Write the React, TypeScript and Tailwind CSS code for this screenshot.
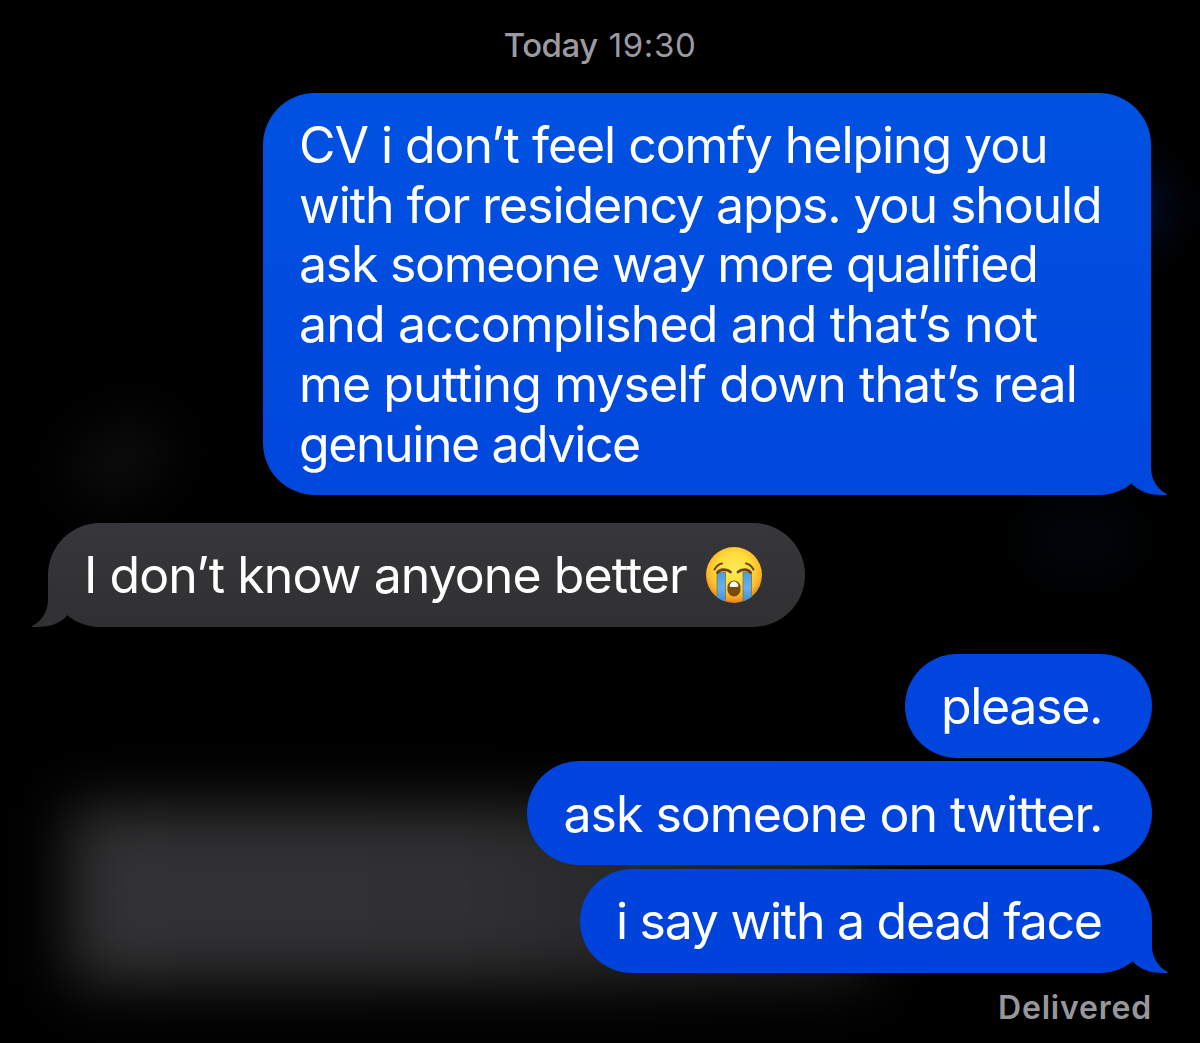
import type { ReactNode } from 'react';
import clsx from 'clsx';

type Line = { text: string; tracking: string };

const advice: Line[] = [
  { text: 'CV i don’t feel comfy helping you', tracking: 'tracking-[-1.06px]' },
  { text: 'with for residency apps. you should', tracking: 'tracking-[-1.09px]' },
  { text: 'ask someone way more qualified', tracking: 'tracking-[-1.26px]' },
  { text: 'and accomplished and that’s not', tracking: 'tracking-[-0.83px]' },
  { text: 'me putting myself down that’s real', tracking: 'tracking-[-0.9px]' },
  { text: 'genuine advice', tracking: 'tracking-[-1.42px]' },
];

function SobEmoji() {
  return (
    <svg viewBox="0 0 58 58" className="relative h-[58px] w-[58px] shrink-0">
      <defs>
        <radialGradient id="skin" cx="0.5" cy="0.4" r="0.6">
          <stop offset="0" stopColor="#ffea55" />
          <stop offset="0.5" stopColor="#ffdc3c" />
          <stop offset="0.78" stopColor="#fdb92c" />
          <stop offset="1" stopColor="#e2801a" />
        </radialGradient>
        <linearGradient id="tear" x1="0" y1="0" x2="0" y2="1">
          <stop offset="0" stopColor="#4a9ce6" />
          <stop offset="0.5" stopColor="#64b2f0" />
          <stop offset="1" stopColor="#3787d8" />
        </linearGradient>
        <clipPath id="face">
          <circle cx="29" cy="29" r="28" />
        </clipPath>
      </defs>
      <circle cx="29" cy="29" r="28" fill="url(#skin)" />
      <g clipPath="url(#face)">
        <path d="M12 26h8.500v32h-8.500z" fill="url(#tear)" stroke="#8f7a35" strokeWidth="0.9" />
        <path d="M38 26h8.500v32h-8.500z" fill="url(#tear)" stroke="#8f7a35" strokeWidth="0.9" />
      </g>
      <g fill="none" stroke="#6b4310" strokeLinecap="round">
        <path d="M12.500 26.500C15 22.800 22 22.800 25.500 26" strokeWidth="2.800" />
        <path d="M33 26C36.500 22.800 43 22.800 45.500 26.500" strokeWidth="2.800" />
        <path d="M9.500 23.500C11.500 20 14 18 17 17.500" strokeWidth="2" />
        <path d="M41 17.500C44 18 46.500 20 48.500 23.500" strokeWidth="2" />
      </g>
      <rect x="22.500" y="34.500" width="13" height="16" rx="6.500" fill="#7a4a0e" />
      <path d="M24.500 40.500c0-3 2-5 4.500-5s4.500 2 4.500 5c-2.700 0.800-6.300 0.800-9 0z" fill="#fff" />
    </svg>
  );
}

// Curl at the bottom corner of the last bubble in a group
function Tail({ side, className }: { side: 'left' | 'right'; className: string }) {
  return (
    <svg
      viewBox="0 0 70 53"
      className={clsx(
        'absolute bottom-0 h-[53px] w-[70px]',
        side === 'right' ? 'right-[-17px]' : 'left-[-17px] -scale-x-100',
        className
      )}
    >
      <path d="M47 4H53V26C53 37 59 47 69 52C69 53 67 53 65 53C52 53 42 50 34 42Z" fill="currentColor" />
    </svg>
  );
}

function Bubble({ className, children }: { className: string; children: ReactNode }) {
  return (
    <div className={clsx('relative flex h-[104px] items-center whitespace-nowrap text-[50px]', className)}>
      {children}
    </div>
  );
}

function Backdrop() {
  return (
    <div className="absolute inset-0">
      <div className="absolute top-[807px] left-[70px] h-[176px] w-[800px] bg-linear-to-r from-[#323234] via-[#303032] to-[#1c1c1e] blur-[29px]" />
      <div className="absolute top-[430px] left-[70px] h-[60px] w-[100px] -rotate-30 rounded-full bg-[#0e0e0e] blur-[26px]" />
      <div className="absolute top-[170px] left-[1105px] h-[76px] w-[60px] rounded-full bg-[#000f2c] blur-[20px]" />
      <div className="absolute top-[510px] left-[1030px] h-[60px] w-[100px] rounded-full bg-[#01060c] blur-[20px]" />
    </div>
  );
}

export default function App() {
  return (
    <div className="relative h-[1043px] w-[1200px] overflow-hidden bg-black font-['Inter',sans-serif] text-white">
      <Backdrop />
      <main className="relative flex flex-col pr-12 pl-12">
        <div className="flex h-[91px] items-center justify-center gap-[11px] text-[33px] text-[#9b9aa1]">
          <span className="font-medium tracking-[-0.5px]">Today</span>
          <span className="tracking-[0.6px]">19:30</span>
        </div>

        <div className="relative mt-[2px] mr-px flex h-[402px] w-[888px] flex-col self-end rounded-[52px] bg-linear-to-b from-[#0051e1] to-[#0047dd] pt-[23px] pl-[36px] text-[50px] leading-[59.7px] whitespace-nowrap">
          <Tail side="right" className="text-[#0047dd]" />
          {advice.map((line) => (
            <span key={line.text} className={clsx('relative', line.tracking)}>
              {line.text}
            </span>
          ))}
        </div>

        <Bubble className="mt-[27.5px] w-[757px] self-start rounded-full bg-linear-to-b from-[#37373b] to-[#303032] pl-[36px]">
          <Tail side="left" className="text-[#323234]" />
          <span className="relative top-px mr-[18px] tracking-[-0.94px]">I don’t know anyone better</span>
          <SobEmoji />
        </Bubble>

        <div className="mt-[27.500px] flex flex-col items-end gap-[3.400px]">
          <Bubble className="w-[247px] rounded-full bg-[#0046de] pl-[36px]">
            <span className="tracking-[-1.33px]">please.</span>
          </Bubble>
          <Bubble className="w-[625px] rounded-full bg-[#0044dd] pl-[36.5px]">
            <span className="relative top-px tracking-[-1px]">ask someone on twitter.</span>
          </Bubble>
          <Bubble className="w-[572px] rounded-full bg-[#0042dc] pl-[36px]">
            <Tail side="right" className="text-[#0042dc]" />
            <span className="relative top-px tracking-[-1.28px]">i say with a dead face</span>
          </Bubble>
        </div>

        <div className="mt-[11px] self-end text-[32px] font-semibold tracking-[0.8px] text-[#97979b]">Delivered</div>
      </main>
    </div>
  );
}
